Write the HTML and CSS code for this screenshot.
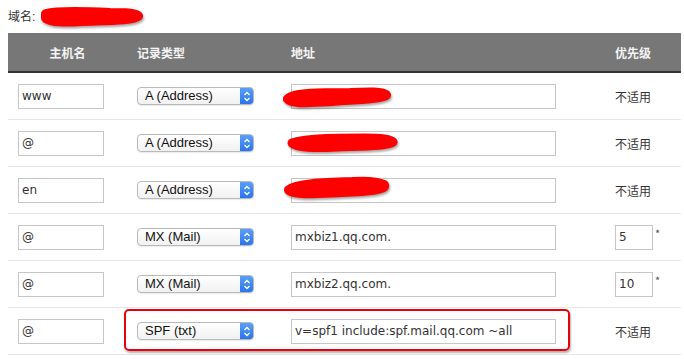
FILE: index.html
```html
<!DOCTYPE html>
<html lang="zh-CN">
<head>
  <meta charset="UTF-8">
  <title>域名解析</title>
  <link rel="stylesheet" href="styles.css">
</head>
<body>
  <div class="domain">
    域名:<svg class="blot blot-domain" width="110" height="22" viewBox="0 0 110 22"><path d="M8 8 C20 5 50 6 72 7 C88 7 96 7 100 10 C96 14 70 14 44 15 C26 16 14 16 8 12 Z" fill="#f00" stroke="#f00" stroke-width="10" stroke-linejoin="round"/></svg>
  </div>

  <table class="records">
    <thead>
      <tr>
        <th class="c-host">主机名</th>
        <th class="c-type">记录类型</th>
        <th class="c-addr">地址</th>
        <th class="c-prio">优先级</th>
      </tr>
    </thead>
    <tbody>
      <tr>
        <td class="c-host"><input class="field host" value="www"></td>
        <td class="c-type"><div class="select"><span class="select-text">A (Address)</span><span class="select-arrow"><svg width="8" height="11" viewBox="0 0 8 11"><path d="M1.5 4 L4 1.5 L6.5 4 M1.5 7 L4 9.5 L6.5 7" fill="none" stroke="#fff" stroke-width="1.3"/></svg></span></div></td>
        <td class="c-addr"><div class="addr"><input class="field address" value="--"><svg class="blot blot-1" width="116" height="24" viewBox="0 0 116 24"><path d="M8 14 C14 8 40 8 70 8 C90 7 102 7 106 10 C102 13 80 14 52 16 C30 17 12 19 8 14 Z" fill="#f00" stroke="#f00" stroke-width="10" stroke-linejoin="round"/></svg></div></td>
        <td class="c-prio">不适用</td>
      </tr>
      <tr>
        <td class="c-host"><input class="field host" value="@"></td>
        <td class="c-type"><div class="select"><span class="select-text">A (Address)</span><span class="select-arrow"><svg width="8" height="11" viewBox="0 0 8 11"><path d="M1.5 4 L4 1.5 L6.5 4 M1.5 7 L4 9.5 L6.5 7" fill="none" stroke="#fff" stroke-width="1.3"/></svg></span></div></td>
        <td class="c-addr"><div class="addr"><input class="field address" value=""><svg class="blot blot-2" width="118" height="22" viewBox="0 0 118 22"><path d="M7 11 C20 6 50 6 80 6 C96 6 106 7 108 10 C104 14 80 14 52 15 C30 16 12 16 7 11 Z" fill="#f00" stroke="#f00" stroke-width="9" stroke-linejoin="round"/></svg></div></td>
        <td class="c-prio">不适用</td>
      </tr>
      <tr>
        <td class="c-host"><input class="field host" value="en"></td>
        <td class="c-type"><div class="select"><span class="select-text">A (Address)</span><span class="select-arrow"><svg width="8" height="11" viewBox="0 0 8 11"><path d="M1.5 4 L4 1.5 L6.5 4 M1.5 7 L4 9.5 L6.5 7" fill="none" stroke="#fff" stroke-width="1.3"/></svg></span></div></td>
        <td class="c-addr"><div class="addr"><input class="field address" value=""><svg class="blot blot-3" width="116" height="26" viewBox="0 0 116 26"><path d="M7 15 C14 9 40 8 70 7 C86 6 96 7 102 10 C104 14 90 16 60 17 C36 18 14 20 7 15 Z" fill="#f00" stroke="#f00" stroke-width="10" stroke-linejoin="round"/></svg></div></td>
        <td class="c-prio">不适用</td>
      </tr>
      <tr>
        <td class="c-host"><input class="field host" value="@"></td>
        <td class="c-type"><div class="select"><span class="select-text">MX (Mail)</span><span class="select-arrow"><svg width="8" height="11" viewBox="0 0 8 11"><path d="M1.5 4 L4 1.5 L6.5 4 M1.5 7 L4 9.5 L6.5 7" fill="none" stroke="#fff" stroke-width="1.3"/></svg></span></div></td>
        <td class="c-addr"><input class="field address" value="mxbiz1.qq.com."></td>
        <td class="c-prio"><input class="field prio" value="5"><span class="req">*</span></td>
      </tr>
      <tr>
        <td class="c-host"><input class="field host" value="@"></td>
        <td class="c-type"><div class="select"><span class="select-text">MX (Mail)</span><span class="select-arrow"><svg width="8" height="11" viewBox="0 0 8 11"><path d="M1.5 4 L4 1.5 L6.5 4 M1.5 7 L4 9.5 L6.5 7" fill="none" stroke="#fff" stroke-width="1.3"/></svg></span></div></td>
        <td class="c-addr"><input class="field address" value="mxbiz2.qq.com."></td>
        <td class="c-prio"><input class="field prio" value="10"><span class="req">*</span></td>
      </tr>
      <tr>
        <td class="c-host"><input class="field host" value="@"></td>
        <td class="c-type marked"><div class="highlight"></div><div class="select"><span class="select-text">SPF (txt)</span><span class="select-arrow"><svg width="8" height="11" viewBox="0 0 8 11"><path d="M1.5 4 L4 1.5 L6.5 4 M1.5 7 L4 9.5 L6.5 7" fill="none" stroke="#fff" stroke-width="1.3"/></svg></span></div></td>
        <td class="c-addr"><input class="field address" value="v=spf1 include:spf.mail.qq.com ~all"></td>
        <td class="c-prio">不适用</td>
      </tr>
    </tbody>
  </table>
</body>
</html>
```

FILE: styles.css
```css
body {
  margin: 0;
  padding: 0 0 0 8px;
  background: #fff;
  font-family: 'Liberation Sans', 'Noto Sans CJK SC', sans-serif;
  font-size: 13px;
  color: #333;
}

.domain {
  height: 33px;
  line-height: 34px;
  font-size: 12px;
  position: relative;
}

.blot {
  position: absolute;
  filter: drop-shadow(1px 2px 1px rgba(0, 0, 0, 0.35));
}

.blot-domain {
  left: 30px;
  top: 6px;
}

.records {
  border-collapse: collapse;
  width: 673px;
  table-layout: fixed;
}

.records th {
  background: #777;
  color: #f4f4f4;
  font-size: 12px;
  font-weight: bold;
  height: 38px;
  padding: 0 10px;
  text-align: left;
  border-bottom: 2px solid #333;
}

.records th.c-host {
  text-align: center;
}

.c-host { width: 99px; }
.c-type { width: 134px; }
.c-addr { width: 304px; }
.c-prio { width: 56px; }

.records td {
  height: 46px;
  padding: 0 10px;
  border-bottom: 1px solid #e6e6e6;
  vertical-align: middle;
  font-size: 12px;
}

.records td.c-prio {
  font-family: 'Noto Sans CJK SC', sans-serif;
  white-space: nowrap;
}

.field {
  box-sizing: border-box;
  height: 25px;
  border: 1px solid #c6c6c6;
  padding: 0 3px;
  font-family: 'DejaVu Sans', sans-serif;
  font-size: 12px;
  color: #333;
  background: #fff;
  outline: none;
  display: block;
}

.host { width: 86px; }
.address { width: 265px; }
.prio {
  width: 38px;
  display: inline-block;
  vertical-align: middle;
}

.req {
  display: inline-block;
  vertical-align: top;
  margin-left: 2px;
  font-size: 11px;
  color: #555;
}

.addr {
  position: relative;
}

.blot-1 { left: -11px; top: 1px; }
.blot-2 { left: -6px; top: 1px; }
.blot-3 { left: -9px; top: -3px; }

.select {
  box-sizing: border-box;
  width: 117px;
  height: 18px;
  display: flex;
  border: 1px solid #b9b9b9;
  border-radius: 4px;
  overflow: hidden;
  background: linear-gradient(#fff, #f1f1f1);
  box-shadow: 0 1px 1px rgba(0, 0, 0, 0.08);
}

.select-text {
  flex: 1;
  padding-left: 7px;
  line-height: 16px;
  font-size: 13px;
  color: #111;
}

.select-arrow {
  width: 13px;
  display: flex;
  align-items: center;
  justify-content: center;
  background: linear-gradient(#5aa0f8, #2a74ee);
}

.marked {
  position: relative;
}

.highlight {
  position: absolute;
  left: -3px;
  top: 1px;
  width: 446px;
  height: 42px;
  box-sizing: border-box;
  border: 2px solid #e8000c;
  border-radius: 5px;
  box-shadow: 1px 2px 2px rgba(0, 0, 0, 0.3);
  pointer-events: none;
}
```
